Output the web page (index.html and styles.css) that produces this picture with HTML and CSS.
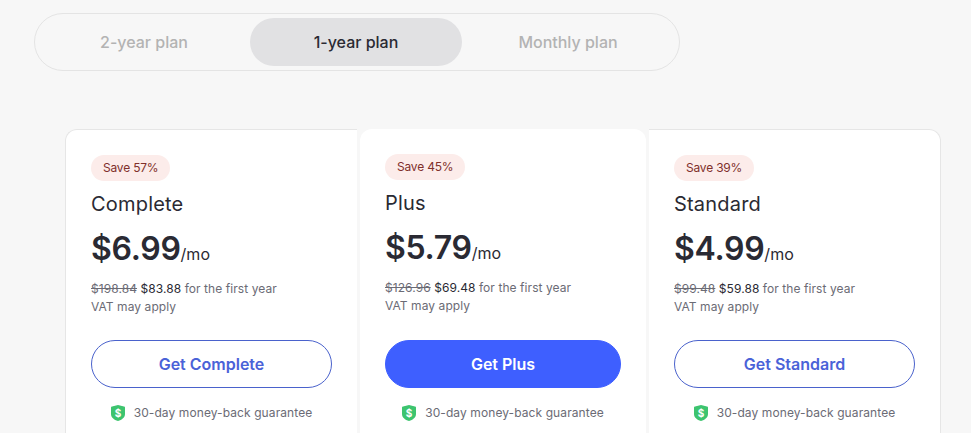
FILE: index.html
```html
<!DOCTYPE html>
<html lang="en">
<head>
<meta charset="utf-8">
<title>Plans</title>
<link rel="stylesheet" href="styles.css">
</head>
<body>
<div class="tabs">
  <div class="tab">2-year plan</div>
  <div class="tab active">1-year plan</div>
  <div class="tab">Monthly plan</div>
</div>
<div class="cards">
  <section class="card first">
    <span class="badge">Save 57%</span>
    <h2 class="name">Complete</h2>
    <p class="price"><strong>$6.99</strong><span class="per">/mo</span></p>
    <p class="detail"><s>$198.84</s> <span class="now">$83.88</span> for the first year<br>VAT may apply</p>
    <a class="btn">Get Complete</a>
    <p class="guarantee"><svg class="shield" viewBox="0 0 14 16"><path d="M7 0 13 1.500a1 1 0 0 1 1 1V9c0 3.500-3 5.800-7 7-4-1.200-7-3.500-7-7V2.500a1 1 0 0 1 1-1z" fill="#3dc46f"/><text x="7" y="11.500" text-anchor="middle" class="dollar">$</text></svg>30-day money-back guarantee</p>
  </section>
  <section class="card featured">
    <span class="badge">Save 45%</span>
    <h2 class="name">Plus</h2>
    <p class="price"><strong>$5.79</strong><span class="per">/mo</span></p>
    <p class="detail"><s>$126.96</s> <span class="now">$69.48</span> for the first year<br>VAT may apply</p>
    <a class="btn solid">Get Plus</a>
    <p class="guarantee"><svg class="shield" viewBox="0 0 14 16"><path d="M7 0 13 1.500a1 1 0 0 1 1 1V9c0 3.500-3 5.800-7 7-4-1.200-7-3.500-7-7V2.500a1 1 0 0 1 1-1z" fill="#3dc46f"/><text x="7" y="11.500" text-anchor="middle" class="dollar">$</text></svg>30-day money-back guarantee</p>
  </section>
  <section class="card last">
    <span class="badge">Save 39%</span>
    <h2 class="name">Standard</h2>
    <p class="price"><strong>$4.99</strong><span class="per">/mo</span></p>
    <p class="detail"><s>$99.48</s> <span class="now">$59.88</span> for the first year<br>VAT may apply</p>
    <a class="btn">Get Standard</a>
    <p class="guarantee"><svg class="shield" viewBox="0 0 14 16"><path d="M7 0 13 1.500a1 1 0 0 1 1 1V9c0 3.500-3 5.800-7 7-4-1.200-7-3.500-7-7V2.500a1 1 0 0 1 1-1z" fill="#3dc46f"/><text x="7" y="11.500" text-anchor="middle" class="dollar">$</text></svg>30-day money-back guarantee</p>
  </section>
</div>
</body>
</html>
```
FILE: styles.css
```css
* { box-sizing: border-box; }
html, body { height: 100%; overflow: hidden; }
body {
  margin: 0;
  background: #f7f7f7;
  font-family: Inter, "Liberation Sans", sans-serif;
  color: #2a2a33;
}
.tabs {
  display: flex;
  width: 646px;
  height: 58px;
  margin: 13px 0 0 34px;
  padding: 4px 5px 4px 3px;
  border: 1px solid #e4e4e4;
  border-radius: 29px;
}
.tab {
  flex: 1;
  display: flex;
  align-items: center;
  justify-content: center;
  border-radius: 24px;
  font-size: 16px;
  font-weight: 500;
  color: #b3b3b3;
}
.tab.active { background: #e1e1e3; color: #2a2a33; }
.cards {
  display: flex;
  align-items: flex-start;
  width: 876px;
  margin: 58px 0 0 65px;
}
.card {
  display: flex;
  flex-direction: column;
  align-items: flex-start;
  height: 340px;
  padding: 25px 27px 0 25px;
  background: #fff;
  border: 1px solid #e6e6e6;
}
.first { width: 294px; border-right: 0; border-radius: 12px 0 0 0; }
.last { width: 294px; border-left: 0; border-radius: 0 12px 0 0; padding-left: 27px; padding-right: 25px; }
.featured {
  width: 286px;
  margin: 0 1px;
  padding: 25px 25px 0;
  border: 0;
  border-radius: 12px 12px 0 0;
  position: relative;
}
.featured::before {
  content: "";
  position: absolute;
  top: 0;
  bottom: 0;
  left: -3px;
  right: -3px;
  border-left: 3px solid #f7f7f7;
  border-right: 3px solid #f7f7f7;
  pointer-events: none;
}
.badge {
  display: block;
  height: 26px;
  padding: 0 12px;
  line-height: 26px;
  border-radius: 13px;
  background: #fcecea;
  color: #80302b;
  font-size: 12px;
  letter-spacing: -.2px;
}
.name {
  margin: 11px 0 0;
  font-size: 20px;
  line-height: 24px;
  font-weight: 400;
  letter-spacing: .2px;
}
.price { margin: 12px 0 0; height: 42px; line-height: 42px; }
.price strong { font-size: 32px; font-weight: 600; letter-spacing: -.3px; }
.per { font-size: 16px; }
.detail {
  margin: 10px 0 0;
  font-size: 12px;
  line-height: 18px;
  color: #6b6b75;
  letter-spacing: .07px;
}
.detail .now { color: #2a2a33; }
.btn {
  display: flex;
  align-items: center;
  justify-content: center;
  width: 100%;
  height: 48px;
  margin-top: 24px;
  border: 1px solid #4a62cc;
  border-radius: 24px;
  color: #4a62d8;
  font-size: 16px;
  font-weight: 600;
}
.btn.solid { background: #3e5fff; border-color: #3e5fff; color: #fff; margin-top: 25px; }
.guarantee {
  display: flex;
  align-items: center;
  justify-content: center;
  width: 100%;
  margin: 16px 0 0;
  font-size: 12px;
  line-height: 18px;
  color: #6b6b75;
  letter-spacing: .09px;
}
.shield { width: 14px; height: 16px; margin-right: 9px; }
.dollar { font-size: 10px; font-weight: 700; fill: #fff; }
```
